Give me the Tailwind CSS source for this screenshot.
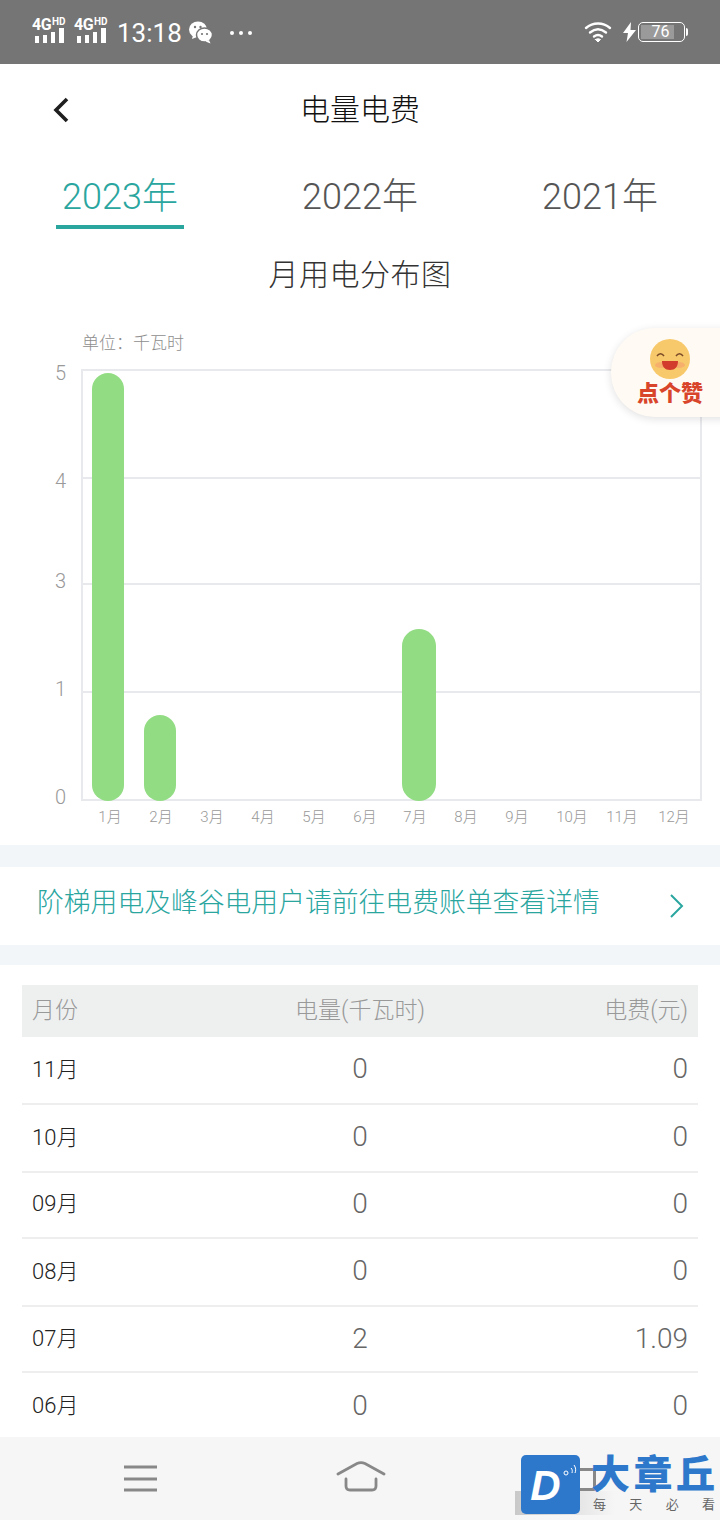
<!DOCTYPE html>
<html lang="zh-CN">
<head>
  <meta charset="UTF-8" />
  <meta name="viewport" content="width=device-width, initial-scale=1.0"/>
  <title>电量电费</title>
  <script src="https://cdn.jsdelivr.net/npm/@tailwindcss/browser@4"></script>
</head>
<body class="bg-white font-['Roboto','Noto_Sans_CJK_SC',sans-serif] text-[#222]">
<div class="relative w-[720px] h-[1520px] overflow-hidden flex flex-col">

  <!-- status bar -->
  <div class="h-[64px] shrink-0 bg-[#757575] text-white flex items-center pl-[32px] pr-[32px]">
    <div class="w-[33px] h-[28px] relative mr-[9px]">
      <span class="absolute left-0 top-[-2px] text-[16px] font-bold leading-[18px] tracking-[-0.5px]">4G</span>
      <span class="absolute left-[20px] top-[-1px] text-[10px] font-bold leading-[10px]">HD</span>
      <svg class="absolute left-0 top-[8px]" width="33" height="18" viewBox="0 0 33 18" fill="#fff"><rect x="3" y="10" width="4" height="7"/><rect x="11" y="9" width="4" height="8"/><rect x="19" y="6" width="4" height="11"/><rect x="27" y="2" width="5" height="15"/></svg>
    </div>
    <div class="w-[33px] h-[28px] relative mr-[10px]">
      <span class="absolute left-0 top-[-2px] text-[16px] font-bold leading-[18px] tracking-[-0.5px]">4G</span>
      <span class="absolute left-[20px] top-[-1px] text-[10px] font-bold leading-[10px]">HD</span>
      <svg class="absolute left-0 top-[8px]" width="33" height="18" viewBox="0 0 33 18" fill="#fff"><rect x="3" y="10" width="4" height="7"/><rect x="11" y="9" width="4" height="8"/><rect x="19" y="6" width="4" height="11"/><rect x="27" y="2" width="5" height="15"/></svg>
    </div>
    <span class="text-[26px] leading-none mt-[2px]">13:18</span>
    <svg class="ml-[7px]" width="24" height="24" viewBox="0 0 24 24" fill="#fff"><ellipse cx="9" cy="9.5" rx="9" ry="8"/><path d="M4 15l-1 4 5-2z"/><ellipse cx="15.5" cy="15" rx="8" ry="7" stroke="#757575" stroke-width="1.5"/><path d="M20 20l1.5 3.5-5-2z"/><circle cx="6" cy="7" r="1.2" fill="#757575"/><circle cx="11.5" cy="7" r="1.2" fill="#757575"/><circle cx="13" cy="14" r="1.1" fill="#757575"/><circle cx="18" cy="14" r="1.1" fill="#757575"/></svg>
    <div class="ml-[17px] mt-[1px] flex gap-[5px]">
      <span class="w-[4px] h-[4px] rounded-full bg-white"></span>
      <span class="w-[4px] h-[4px] rounded-full bg-white"></span>
      <span class="w-[4px] h-[4px] rounded-full bg-white"></span>
    </div>
    <svg class="ml-auto" width="28" height="22" viewBox="0 0 28 22" fill="none" stroke="#fff" stroke-width="2.4" stroke-linecap="round"><path d="M2 7c7-6 17-6 24 0"/><path d="M6 11.500c5-4 11-4 16 0"/><path d="M10 15.500c2.500-2 5.500-2 8 0"/><path d="M11.500 18.500l2.500 2.500 2.500-2.500c-1.500-1-3.500-1-5 0z" fill="#fff" stroke-width="1"/></svg>
    <svg class="ml-[11px]" width="13" height="20" viewBox="0 0 13 20" fill="#fff"><path d="M8 0L0 11h5l-1.500 9L13 8H7.500z"/></svg>
    <div class="ml-[2px] w-[47px] h-[20px] border border-white rounded-[5px] flex items-center p-[2px]">
      <div class="w-[33px] h-full bg-[#9a9a9a] text-[16px] leading-none flex items-center justify-center pl-[6px]">76</div>
    </div>
    <div class="w-[2px] h-[8px] bg-white rounded-r ml-[1px]"></div>
  </div>

  <!-- header -->
  <div class="h-[92px] shrink-0 relative flex items-center justify-center">
    <svg class="absolute left-[52px] top-[33px]" width="18" height="26" viewBox="0 0 18 26" fill="none" stroke="#1f1f1f" stroke-width="3.6"><path d="M15 2L4 13l11 11"/></svg>
    <h1 class="text-[30px] leading-none font-light text-[#111]">电量电费</h1>
  </div>

  <!-- year tabs -->
  <div class="grid grid-cols-3 shrink-0 h-[73px]">
    <div class="flex justify-center">
      <div class="w-[128px] h-[73px] border-b-[4px] border-[#2aa69f] text-[#2aa69f] text-[36px] font-light text-center leading-[82px] whitespace-nowrap">2023年</div>
    </div>
    <div class="text-[#555] text-[36px] font-light text-center leading-[82px]">2022年</div>
    <div class="text-[#555] text-[36px] font-light text-center leading-[82px]">2021年</div>
  </div>

  <div class="shrink-0 h-[94px] text-center text-[30px] tracking-[0.5px] leading-[92px] text-[#333] font-light">月用电分布图</div>

  <!-- chart -->
  <div class="shrink-0 h-[522px] pl-[82px] relative">
    <div class="text-[17px] leading-[24px] text-[#8e8e8e] font-light pt-[8px] h-[46px]">单位：千瓦时</div>
    <div class="relative w-[621px] h-[432px] border-2 border-[#e8e9ec] ml-[-1px]">
      <div class="absolute left-0 right-0 top-[106px] h-[2px] bg-[#e8e9ec]"></div>
      <div class="absolute left-0 right-0 top-[212px] h-[2px] bg-[#e8e9ec]"></div>
      <div class="absolute left-0 right-0 top-[320px] h-[2px] bg-[#e8e9ec]"></div>
      <div class="absolute left-[9px] top-[2px] bottom-[-2px] w-[32px] rounded-full bg-[#92dd83]"></div>
      <div class="absolute left-[61px] top-[344px] bottom-[-2px] w-[32px] rounded-full bg-[#92dd83]"></div>
      <div class="absolute left-[319px] top-[258px] bottom-[-2px] w-[34px] rounded-full bg-[#92dd83]"></div>
      <span class="absolute left-[-28px] top-[-10px] text-[20px] leading-[24px] text-[#999] font-light">5</span>
      <span class="absolute left-[-28px] top-[98px] text-[20px] leading-[24px] text-[#999] font-light">4</span>
      <span class="absolute left-[-28px] top-[198px] text-[20px] leading-[24px] text-[#999] font-light">3</span>
      <span class="absolute left-[-28px] top-[306px] text-[20px] leading-[24px] text-[#999] font-light">1</span>
      <span class="absolute left-[-28px] top-[414px] text-[20px] leading-[24px] text-[#999] font-light">0</span>
    </div>
    <div class="relative h-[30px] pt-[1px] text-[15px] leading-[30px] text-[#999] font-light">
      <span class="absolute left-[28px] -translate-x-1/2">1月</span>
      <span class="absolute left-[79px] -translate-x-1/2">2月</span>
      <span class="absolute left-[130px] -translate-x-1/2">3月</span>
      <span class="absolute left-[181px] -translate-x-1/2">4月</span>
      <span class="absolute left-[232px] -translate-x-1/2">5月</span>
      <span class="absolute left-[283px] -translate-x-1/2">6月</span>
      <span class="absolute left-[333px] -translate-x-1/2">7月</span>
      <span class="absolute left-[384px] -translate-x-1/2">8月</span>
      <span class="absolute left-[435px] -translate-x-1/2">9月</span>
      <span class="absolute left-[490px] -translate-x-1/2">10月</span>
      <span class="absolute left-[540px] -translate-x-1/2">11月</span>
      <span class="absolute left-[592px] -translate-x-1/2">12月</span>
    </div>
  </div>

  <!-- notice -->
  <div class="h-[120px] shrink-0 bg-[#f3f6f8] pt-[22px]">
    <div class="h-[78px] bg-white flex items-center pl-[37px] pr-[36px] justify-between">
      <span class="text-[26.8px] leading-none text-[#2aa69f] font-light mt-[-6px] whitespace-nowrap">阶梯用电及峰谷电用户请前往电费账单查看详情</span>
      <svg width="15" height="26" viewBox="0 0 15 26" fill="none" stroke="#2aa69f" stroke-width="2"><path d="M2 2l11 11L2 24"/></svg>
    </div>
  </div>

  <!-- table -->
  <div class="flex-1 min-h-0 overflow-hidden px-[22px] pt-[20px] text-[22px]">
    <div class="grid grid-cols-3 items-center h-[52px] pt-[1px] bg-[#eef0f0] px-[10px] text-[#999] text-[23px] font-light">
      <span>月份</span><span class="text-center whitespace-nowrap">电量(千瓦时)</span><span class="text-right">电费(元)</span>
    </div>
    <div class="grid grid-cols-3 items-center h-[68px] pb-[2px] border-b-2 border-[#eeeeee] px-[10px]">
      <span class="text-[#222] font-light">11月</span><span class="text-center text-[28px] text-[#666] font-light">0</span><span class="text-right text-[28px] text-[#666] font-light">0</span>
    </div>
    <div class="grid grid-cols-3 items-center h-[68px] pb-[2px] border-b-2 border-[#eeeeee] px-[10px]">
      <span class="text-[#222] font-light">10月</span><span class="text-center text-[28px] text-[#666] font-light">0</span><span class="text-right text-[28px] text-[#666] font-light">0</span>
    </div>
    <div class="grid grid-cols-3 items-center h-[66px] pb-[3px] border-b-2 border-[#eeeeee] px-[10px]">
      <span class="text-[#222] font-light">09月</span><span class="text-center text-[28px] text-[#666] font-light">0</span><span class="text-right text-[28px] text-[#666] font-light">0</span>
    </div>
    <div class="grid grid-cols-3 items-center h-[68px] pb-[2px] border-b-2 border-[#eeeeee] px-[10px]">
      <span class="text-[#222] font-light">08月</span><span class="text-center text-[28px] text-[#666] font-light">0</span><span class="text-right text-[28px] text-[#666] font-light">0</span>
    </div>
    <div class="grid grid-cols-3 items-center h-[66px] pb-[1px] border-b-2 border-[#eeeeee] px-[10px]">
      <span class="text-[#222] font-light">07月</span><span class="text-center text-[28px] text-[#666] font-light">2</span><span class="text-right text-[28px] text-[#666] font-light">1.09</span>
    </div>
    <div class="grid grid-cols-3 items-center h-[65px] px-[10px]">
      <span class="text-[#222] font-light">06月</span><span class="text-center text-[28px] text-[#666] font-light">0</span><span class="text-right text-[28px] text-[#666] font-light">0</span>
    </div>
  </div>

  <!-- bottom nav -->
  <div class="h-[83px] shrink-0 bg-[#f6f6f6] flex items-start">
    <svg class="ml-[123px] mt-[28px]" width="35" height="28" viewBox="0 0 35 28" fill="none" stroke="#888" stroke-width="3"><path d="M1 2h33M1 14h33M1 25h33"/></svg>
    <svg class="ml-[178px] mt-[24px]" width="50" height="32" viewBox="0 0 50 32" fill="none" stroke="#888" stroke-width="2.800" stroke-linecap="round"><path d="M2 13L21 2.500c2.500-1 5.500-1 8 0L48 13"/><path d="M10 18v7c0 2.500 1.500 4 4 4h22c2.500 0 4-1.500 4-4v-7"/></svg>
    <div class="ml-[182px] mt-[31px] w-[28px] h-[23px] border-[3px] border-[#888] rounded-[2px]"></div>
  </div>

  <!-- like badge -->
  <div class="absolute left-[611px] top-[328px] w-[120px] h-[89px] rounded-l-[44px] bg-[#fffaf4] shadow-[0_2px_8px_rgba(0,0,0,0.12)] flex flex-col items-center pr-[2px]">
    <svg class="mt-[11px]" width="40" height="40" viewBox="0 0 40 40"><circle cx="20" cy="20" r="20" fill="#f8c96a"/><ellipse cx="11" cy="26" rx="6" ry="3" fill="#f5a56e" opacity="0.7"/><ellipse cx="29" cy="26" rx="6" ry="3" fill="#f5a56e" opacity="0.7"/><path d="M7 17c2-3 5-3 7 0M26 17c2-3 5-3 7 0" fill="none" stroke="#7a4a28" stroke-width="1.500"/><path d="M12 22h16c0 6-3 9-8 9s-8-3-8-9z" fill="#d13c2c"/></svg>
    <span class="text-[22px] leading-[24px] font-black text-[#d8452a] whitespace-nowrap mt-[3px]">点个赞</span>
  </div>

  <!-- watermark -->
  <div class="absolute left-[515px] top-[1455px] w-[205px] h-[65px]">
    <div class="absolute left-0 bottom-[5px] w-[100px] h-[24px] bg-gradient-to-r from-[#c9c9c9] to-transparent"></div>
    <div class="absolute left-[6px] top-0 w-[59px] h-[59px] rounded-[5px] bg-[#2e78cc] flex items-center justify-center">
      <span class="font-['Liberation_Sans',sans-serif] font-bold italic text-[42px] leading-none text-white ml-[-10px] mt-[2px]">D</span>
      <svg class="absolute right-[3px] top-[8px]" width="14" height="14" viewBox="0 0 14 14" fill="none" stroke="#fff" stroke-width="1"><circle cx="3" cy="10" r="2"/><path d="M8 5c1.500 1.500 1.500 3 1 5M11 2c2 2.500 2 6 1 8"/></svg>
    </div>
    <span class="absolute left-[76px] top-0 text-[39px] leading-[40px] font-black text-[#2e78cc] tracking-[3.5px] whitespace-nowrap">大章丘</span>
    <div class="absolute left-[78px] top-[42px] w-[122px] flex justify-between text-[13px] leading-[16px] text-[#666]">
      <span>每</span><span>天</span><span>必</span><span>看</span>
    </div>
  </div>
</div>
</body>
</html>
